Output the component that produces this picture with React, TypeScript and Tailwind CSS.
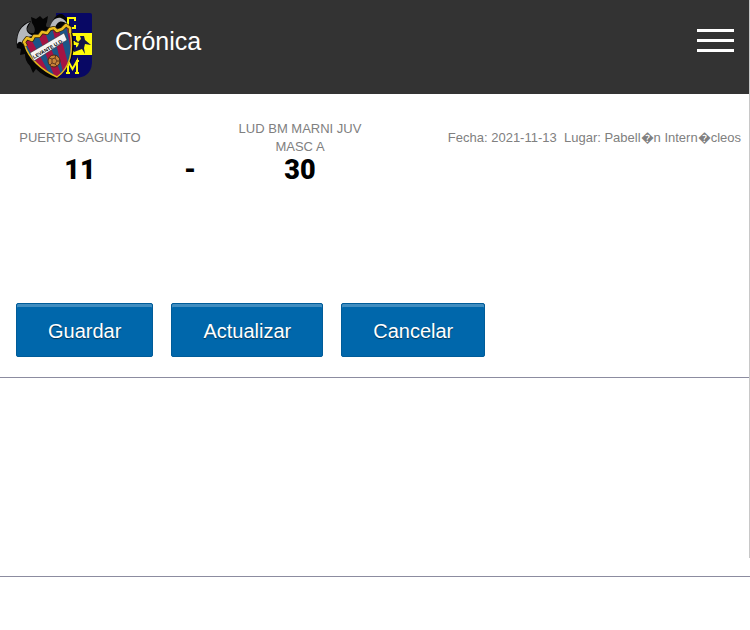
import React from "react";

function Crest() {
  return (
    <svg viewBox="0 0 76 68" className="h-[68px] w-[76px] shrink-0" role="img" aria-label="Levante U.D. CBM">
      <path d="M40 1H74Q76 1 76 3V51Q75 66 58 66H40Z" fill="#080864" />
      <path d="M48 21H76V43H48Z" fill="#fffb08" />
      <path d="M53 24H60V29H55ZM56 33H60V39H55Z" fill="#080864" />
      <path d="M58 25L62 30L65 27L64 24L68 24L69 28L75 33L69 32L68 36L69 42L66 37L58 40L57 38L62 34L63 31L59 30Z" fill="#151548" />
      {/* bat */}
      <path d="M1 36C-1 22 4 12 15 9L11 17C12 20 14 22 18 21C20 17 18 14 16 11L15 5L20 7L24 4L27 7L32 4L31 10C29 14 30 16 35 15C36 7 41 1 46 2C51 5 54 10 56 20C60 36 57 48 50 57L41 67C33 67 25 62 20 57L17 61L14 54C10 50 9 46 9 42L4 43L5 37Z" fill="#050505" />
      <path d="M1 32C1 20 5 14 14 10C8 16 10 22 18 24C11 24 9 27 7 32C5 29 3 29 1 32Z" fill="#b5b8bd" />
      <path d="M34 16C36 5 46 1 52 13C46 7 41 9 39 16Z" fill="#b5b8bd" />
      <g fill="none" stroke="#fffb08" strokeWidth="2">
        <path d="M59 9V6H52V16H59V13" />
        <path d="M52 61V49L56.500 57L61 49V61M50 61H54M59 61H63M50 49H53M60 49H63" />
      </g>
      {/* shield */}
      <clipPath id="crest-shield">
        <path d="M8 31L20 23L36 17L53 16C59 40 54 57 41 65C24 58 12 45 8 31Z" />
      </clipPath>
      <g clipPath="url(#crest-shield)">
        <path d="M0 10H60V68H0Z" fill="#1c5588" />
        <path d="M8 28L14 25L35 65H28ZM21 20L28 18L45 62L39 66ZM36 15L42 14L53 55L47 60ZM50 12H56L62 40L56 45Z" fill="#a51343" />
      </g>
      <path d="M54 19C58 39 54 56 41 65C25 58 13 46 9 34" fill="none" stroke="#dfb51b" strokeWidth="1.500" />
      <path d="M10 34L8 30L11 26L16 28L18 24L23 24L26 20L31 21L34 17L38 16L41 19L46 17L50 13L54 16L54 21" fill="none" stroke="#332609" strokeWidth="4" strokeLinejoin="round" />
      <path d="M10 34L8 30L11 26L16 28L18 24L23 24L26 20L31 21L34 17L38 16L41 19L46 17L50 13L54 16L54 21" fill="none" stroke="#edbd20" strokeWidth="2.500" strokeLinejoin="round" />
      <path d="M14 41L48 21L51 28L18 49Z" fill="#f4f4f4" stroke="#222" strokeWidth="0.500" />
      <text x="18" y="47" transform="rotate(-30 18 47)" className="fill-black font-['Liberation_Sans'] text-[5px] font-bold">
        LEVANTE U.D.
      </text>
      <circle cx="38" cy="49" r="6" fill="#c78336" stroke="#4b2716" />
      <path d="M36 47L39 46L41 49L39 52L36 51ZM33 46L36 47M39 46L40 43M41 49H44M39 52L41 54M36 51L34 53" fill="none" stroke="#4b2716" strokeWidth="0.800" />
    </svg>
  );
}

function Team({ name, score }: { name: string; score: number }) {
  return (
    <div className="flex w-[160px] flex-col items-center text-center">
      <span className="flex h-9 w-[130px] items-center justify-center text-[13px] leading-[18px] text-[#808080]">
        {name}
      </span>
      <Score>{score}</Score>
    </div>
  );
}

function Score({ children }: { children: React.ReactNode }) {
  return (
    <strong className="font-['Roboto','Liberation_Sans',sans-serif] text-[27px] leading-7 font-black text-black tabular-nums">
      {children}
    </strong>
  );
}

const actions = ["Guardar", "Actualizar", "Cancelar"];

export default function App() {
  return (
    <div className="bg-white font-['Liberation_Sans',Arial,sans-serif]">
      <div className="border-r border-[#c8c8c8]">
        <header className="flex h-[94px] items-start bg-[#333] pt-3 pr-[15px] pl-4 text-white">
          <Crest />
          <h1 className="ml-[23px] pt-4 text-[25px] leading-[26px]">Crónica</h1>
          <button type="button" aria-label="Menú" className="mt-[17px] ml-auto flex w-[37px] flex-col gap-[7px]">
            <span className="h-[3px] w-full bg-white" />
            <span className="h-[3px] w-full bg-white" />
            <span className="h-[3px] w-full bg-white" />
          </button>
        </header>
        <main>
          <section className="flex justify-between pt-[26px] pr-2">
            <div className="flex">
              <Team name="PUERTO SAGUNTO" score={11} />
              <div className="flex w-[60px] flex-col items-center justify-end">
                <Score>-</Score>
              </div>
              <Team name="LUD BM MARNI JUV MASC A" score={30} />
            </div>
            <p className="pt-[9px] text-[13px] leading-[18px] whitespace-pre text-[#808080]">
              {"Fecha: 2021-11-13  Lugar: Pabell\uFFFDn Intern\uFFFDcleos"}
            </p>
          </section>
          <div className="mt-[119px] flex gap-[18px] px-4 pb-5">
            {actions.map((label) => (
              <button
                key={label}
                type="button"
                className="h-[54px] rounded-[2px] border border-[#005c99] bg-[#0067ab] px-[31px] pt-[2px] text-[20px] leading-6 text-white shadow-[inset_0_3px_0_#408dc0] text-shadow-[0_1px_1px_#00000080]"
              >
                {label}
              </button>
            ))}
          </div>
          <hr className="border-[#8c8ca0]" />
          <section aria-label="Crónica" className="h-[180px]" />
        </main>
      </div>
      <hr className="mt-[18px] border-[#8c8ca0]" />
    </div>
  );
}
